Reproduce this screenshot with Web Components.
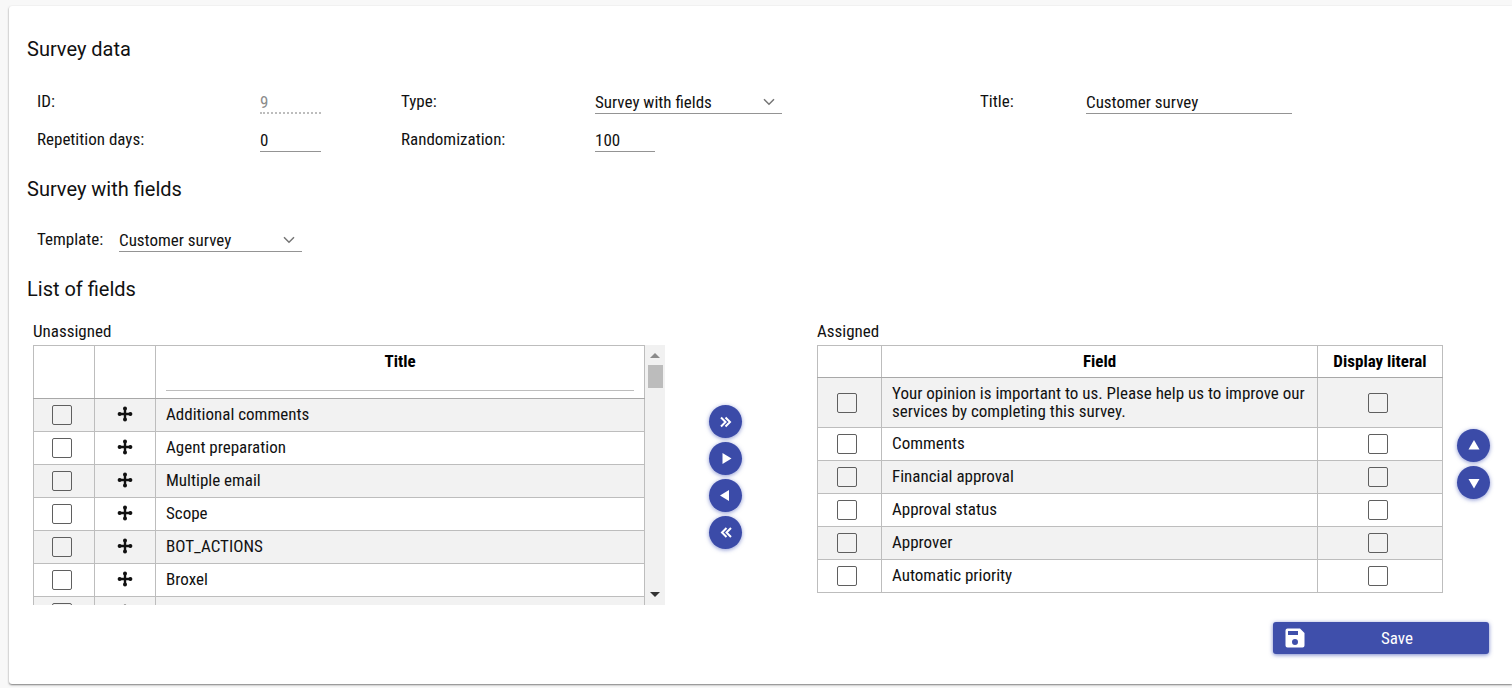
<!DOCTYPE html>
<html lang="en">
<head>
<meta charset="utf-8">
<meta name="viewport" content="width=device-width, initial-scale=1">
<title>Survey</title>
<style>
  html { background: #f8f8f8; }
  body {
    margin: 0;
    padding: 6px 0 4px 9px;
    background: #f8f8f8;
    color: #111;
    font: 17px/18px "Roboto Condensed", Roboto, "Liberation Sans", sans-serif;
  }
</style>
</head>
<body>
<survey-page></survey-page>
<script>
const attach = (host, html) => {
  const template = document.createElement('template');
  template.innerHTML = html;
  host.attachShadow({ mode: 'open' }).append(template.content.cloneNode(true));
  return host.shadowRoot;
};

const BOX_CSS = `
  input[type=checkbox] {
    appearance: none; display: block; box-sizing: border-box;
    width: 20px; height: 20px; margin: 0 auto;
    border: 1px solid #5f5f5f; border-radius: 2px;
  }
  input[type=checkbox]:checked { background: #3f51b5; }`;

const TABLE_CSS = `
  table { width: 100%; border-collapse: collapse; table-layout: fixed; }
  th, td { box-sizing: border-box; border: 1px solid #bdbdbd; padding: 0 10px 2px; }
  th { font-weight: 700; text-align: center; color: #000; }
  thead th { border-bottom-color: #a8a8a8; }
  td { height: 33px; vertical-align: middle; }
  td.tick { padding: 0 5px 0 0; }
  tbody tr:nth-child(odd) { background: #f2f2f2; }
  ${BOX_CSS}`;

/* Titled block of the form */
customElements.define('form-section', class extends HTMLElement {
  constructor() {
    super();
    attach(this, `
      <style>
        :host { display: block; }
        h2 { margin: 0; font: 400 20px/24px Roboto, "Liberation Sans", sans-serif; }
      </style>
      <h2></h2><slot></slot>`);
  }
  connectedCallback() { this.shadowRoot.querySelector('h2').textContent = this.getAttribute('heading'); }
});

/* Label with a text box or a drop-down */
customElements.define('form-field', class extends HTMLElement {
  connectedCallback() {
    if (this.shadowRoot) return;
    const value = this.getAttribute('value');
    const control = this.hasAttribute('dropdown')
      ? `<select id="c"><option>${value}</option></select>
         <svg viewBox="0 0 12 8" aria-hidden="true"><path d="M1 1.2 6 6.2 11 1.2"/></svg>`
      : `<input id="c" type="text" value="${value}" ${this.hasAttribute('disabled') ? 'disabled' : ''}>`;
    attach(this, `
      <style>
        :host { display: flex; align-items: flex-start; min-width: 0; }
        label { flex: none; width: var(--label-width); line-height: 22px; }
        .box { position: relative; width: var(--control-width); }
        input, select {
          appearance: none; display: block; box-sizing: border-box; width: 100%; height: 24px;
          margin: 0; padding: 0; border: 0; border-bottom: 1px solid #949494; border-radius: 0;
          background: transparent; color: #111; font: inherit; outline: 0;
        }
        input:disabled { padding-top: 1px; color: #8c8c8c; border-bottom: 2px dotted #bdbdbd; }
        svg { position: absolute; right: 7px; top: 8px; width: 12px; height: 8px; pointer-events: none;
              fill: none; stroke: #757575; stroke-width: 1.5; }
      </style>
      <label for="c">${this.getAttribute('label')}</label>
      <div class="box">${control}</div>`);
  }
});

const GLYPHS = {
  'all-right': '<path d="M5 5.500 9.500 10l-4.500 4.500M9.500 5.500 14 10l-4.500 4.500" fill="none" stroke="#fff" stroke-width="2"/>',
  'right': '<path d="M6.500 4v11l9-5.500z"/>',
  'left': '<path d="M13 4v11l-9-5.500z"/>',
  'all-left': '<path d="M15 5 10.500 9.500l4.500 4.500M10.500 5 6 9.500 10.500 14" fill="none" stroke="#fff" stroke-width="2"/>',
  'up': '<path d="M4.500 13.500h11L10 4z"/>',
  'down': '<path d="M4.500 6h11L10 15.500z"/>'
};

/* Round action button */
customElements.define('round-button', class extends HTMLElement {
  connectedCallback() {
    if (this.shadowRoot) return;
    attach(this, `
      <style>
        :host { display: block; }
        button {
          display: grid; place-items: center; width: 33px; height: 33px; padding: 0;
          border: 0; border-radius: 50%; background: #3b4ba8;
          box-shadow: 0 1px 4px rgba(63,81,181,.6); cursor: pointer;
        }
        svg { width: 20px; height: 20px; fill: #fff; }
      </style>
      <button type="button" aria-label="${this.getAttribute('label')}">
        <svg viewBox="0 0 20 20" aria-hidden="true">${GLYPHS[this.getAttribute('glyph')]}</svg>
      </button>`);
  }
});

/* Fields that can still be added, in a scrolling table */
customElements.define('unassigned-list', class extends HTMLElement {
  constructor() {
    super();
    const move = `<svg class="move" viewBox="0 0 16 16" aria-hidden="true">
      <path d="M8 2v12M2 8h12" stroke="#111" stroke-width="2.400"/>
      <circle cx="8" cy="2.600" r="2"/><circle cx="8" cy="13.400" r="2"/>
      <circle cx="2.600" cy="8" r="2"/><circle cx="13.400" cy="8" r="2"/></svg>`;
    const rows = ['Additional comments', 'Agent preparation', 'Multiple email', 'Scope', 'BOT_ACTIONS', 'Broxel', '']
      .map(t => `<tr><td class="tick"><input type="checkbox" aria-label="${t || 'Field'}"></td>
        <td class="handle">${move}</td><td>${t}</td></tr>`).join('');
    attach(this, `
      <style>
        :host { display: flex; max-height: 260px; }
        .pane { flex: 1; min-width: 0; overflow-y: auto; scrollbar-width: none; }
        ${TABLE_CSS}
        thead th { height: 53px; vertical-align: top; padding-top: 6px; }
        .narrow { width: 61px; }
        input[type=text] {
          display: block; box-sizing: border-box; width: 100%; height: 21px; padding: 0;
          border: 0; border-bottom: 1px solid #bdbdbd; background: transparent; font: inherit; outline: 0;
        }
        .move { display: block; width: 16px; height: 16px; margin: 0 auto; fill: #111; }
        .bar { display: flex; flex-direction: column; align-items: center; width: 20px; background: #f1f1f1; }
        .bar svg { width: 10px; height: 6px; margin: 7px 0; }
        .thumb { width: 15px; height: 23px; background: #bcbcbc; }
        .rest { flex: 1; }
      </style>
      <div class="pane" tabindex="0">
        <table>
          <colgroup><col class="narrow"><col class="narrow"><col></colgroup>
          <thead><tr><th></th><th></th><th>Title<input type="text" aria-label="Filter by title"></th></tr></thead>
          <tbody>${rows}</tbody>
        </table>
      </div>
      <div class="bar" aria-hidden="true">
        <svg viewBox="0 0 10 6"><path d="M0 6h10L5 1z" fill="#8a8a8a"/></svg>
        <div class="thumb"></div><div class="rest"></div>
        <svg viewBox="0 0 10 6"><path d="M0 0h10L5 5z" fill="#333"/></svg>
      </div>`);
  }
});

/* Fields that belong to the survey */
customElements.define('assigned-list', class extends HTMLElement {
  constructor() {
    super();
    const rows = ['Your opinion is important to us. Please help us to improve our services by completing this survey.',
      'Comments', 'Financial approval', 'Approval status', 'Approver', 'Automatic priority']
      .map(t => `<tr><td class="tick"><input type="checkbox" aria-label="Select: ${t}"></td><td>${t}</td>
        <td class="tick"><input type="checkbox" aria-label="Display literal: ${t}"></td></tr>`).join('');
    attach(this, `
      <style>
        :host { display: block; }
        ${TABLE_CSS}
        thead th { height: 32px; }
        th:last-child { padding: 0 0 2px; }
        tbody tr:first-child td { height: 50px; }
        .pick { width: 64px; }
        .literal { width: 125px; }
      </style>
      <table>
        <colgroup><col class="pick"><col><col class="literal"></colgroup>
        <thead><tr><th></th><th>Field</th><th>Display literal</th></tr></thead>
        <tbody>${rows}</tbody>
      </table>`);
  }
});

customElements.define('save-button', class extends HTMLElement {
  constructor() {
    super();
    attach(this, `
      <style>
        :host { display: block; }
        button {
          display: flex; align-items: center; width: 216px; height: 32px; padding: 0 0 0 12px;
          border: 0; border-radius: 3px; background: #3f4fab; color: #fff; font: inherit;
          box-shadow: 0 1px 4px rgba(63,81,181,.7); cursor: pointer;
        }
        svg { width: 20px; height: 20px; }
        span { flex: 1; }
      </style>
      <button type="button">
        <svg viewBox="0 0 20 20" aria-hidden="true">
          <path fill="#fff" fill-rule="evenodd" d="M2.500.500H15L19.500 5v12.500a2 2 0 0 1-2 2h-15a2 2 0 0 1-2-2v-15a2 2 0 0 1 2-2zM3 3v4h10V3zM10 11a3 3 0 1 0 0 6 3 3 0 0 0 0-6z"/>
        </svg>
        <span><slot></slot></span>
      </button>`);
  }
});

customElements.define('survey-page', class extends HTMLElement {
  constructor() {
    super();
    attach(this, `
      <style>
        :host { display: block; }
        main { box-sizing: border-box; padding: 31px 22px 30px 18px; background: #fff;
               border-radius: 3px 0 0 3px; box-shadow: 0 1px 2px rgba(0,0,0,.5); }
        form-section + form-section { margin-top: 25px; }
        .fields { display: grid; grid-template-columns: 364fr 579fr 510fr; gap: 14px 0; padding: 29px 0 0 10px; }
        .c1 { --label-width: 223px; --control-width: 61px; }
        .c2 { --label-width: 194px; --control-width: 187px; }
        .c2.short { --control-width: 60px; }
        .c3 { --label-width: 106px; --control-width: 206px; }
        .template { --label-width: 82px; --control-width: 183px; padding: 27px 0 0 10px; }
        .lists { display: grid; grid-template-columns: minmax(0, 632fr) 152px minmax(0, 626fr) 47px;
                 padding: 20px 0 0 6px; }
        h3 { margin: 0 0 4px; font-size: inherit; line-height: 20px; font-weight: 400; }
        .stack { display: grid; gap: 4px; align-content: start; }
        .transfer { padding: 84px 0 0 44px; }
        .order { padding: 108px 0 0 14px; }
        footer { display: flex; justify-content: flex-end; padding: 17px 1px 0 0; }
      </style>
      <main>
        <form-section heading="Survey data">
          <div class="fields">
            <form-field class="c1" label="ID:" value="9" disabled></form-field>
            <form-field class="c2" label="Type:" value="Survey with fields" dropdown></form-field>
            <form-field class="c3" label="Title:" value="Customer survey"></form-field>
            <form-field class="c1" label="Repetition days:" value="0"></form-field>
            <form-field class="c2 short" label="Randomization:" value="100"></form-field>
          </div>
        </form-section>
        <form-section heading="Survey with fields">
          <form-field class="template" label="Template:" value="Customer survey" dropdown></form-field>
        </form-section>
        <form-section heading="List of fields">
          <div class="lists">
            <section><h3>Unassigned</h3><unassigned-list></unassigned-list></section>
            <div class="stack transfer">
              <round-button glyph="all-right" label="Assign all"></round-button>
              <round-button glyph="right" label="Assign"></round-button>
              <round-button glyph="left" label="Unassign"></round-button>
              <round-button glyph="all-left" label="Unassign all"></round-button>
            </div>
            <section><h3>Assigned</h3><assigned-list></assigned-list></section>
            <div class="stack order">
              <round-button glyph="up" label="Move up"></round-button>
              <round-button glyph="down" label="Move down"></round-button>
            </div>
          </div>
        </form-section>
        <footer><save-button>Save</save-button></footer>
      </main>`);
  }
});
</script>
</body>
</html>
